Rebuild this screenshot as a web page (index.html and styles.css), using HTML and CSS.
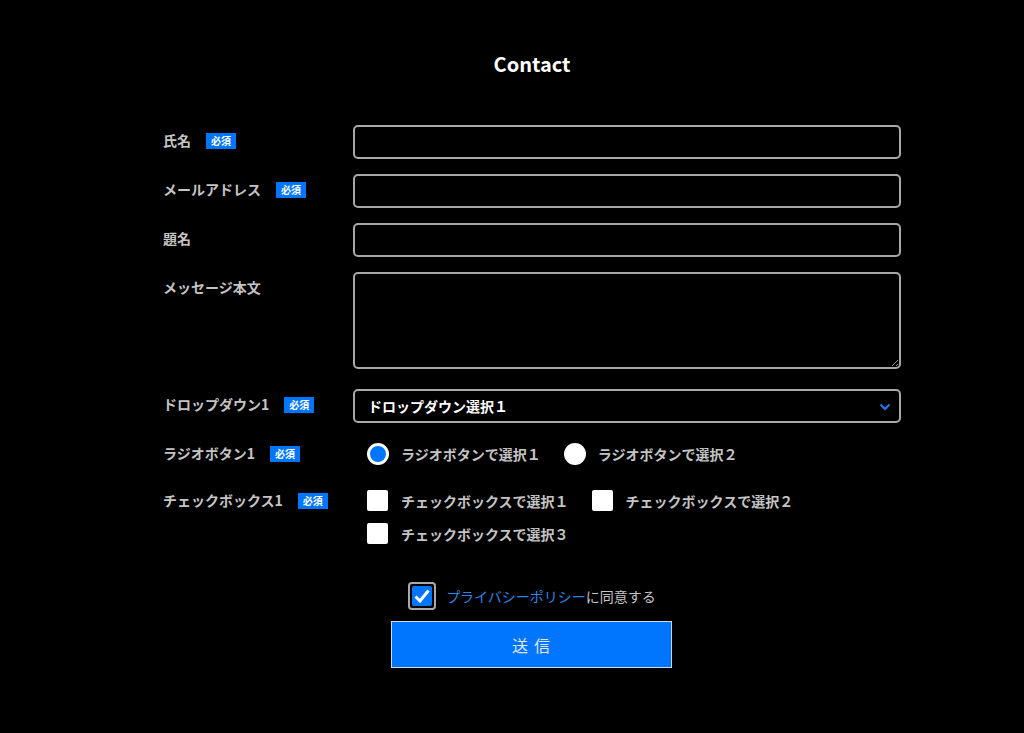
FILE: index.html
```html
<!DOCTYPE html>
<html lang="ja">
<head>
    <meta charset="UTF-8">
    <meta name="viewport" content="width=device-width, initial-scale=1.0">
    <title>Contact</title>
    <link rel="stylesheet" href="styles.css">
</head>
<body>
    <div class="container">
        <h1 class="title">Contact</h1>

        <form class="contact-form">
            <div class="form-row">
                <label class="form-label">氏名<span class="required">必須</span></label>
                <div class="form-field"><input type="text" class="text-input"></div>
            </div>
            <div class="form-row">
                <label class="form-label">メールアドレス<span class="required">必須</span></label>
                <div class="form-field"><input type="email" class="text-input"></div>
            </div>
            <div class="form-row">
                <label class="form-label">題名</label>
                <div class="form-field"><input type="text" class="text-input"></div>
            </div>
            <div class="form-row">
                <label class="form-label">メッセージ本文</label>
                <div class="form-field"><textarea class="text-input textarea"></textarea></div>
            </div>
            <div class="form-row row-select">
                <label class="form-label">ドロップダウン1<span class="required">必須</span></label>
                <div class="form-field">
                    <div class="select-box">
                        <span>ドロップダウン選択１</span>
                        <svg class="chevron" width="12" height="8" viewBox="0 0 12 8"><path d="M1.5 1.5 L6 6 L10.5 1.5" fill="none" stroke="#1a7cf5" stroke-width="2"/></svg>
                    </div>
                </div>
            </div>
            <div class="form-row row-radio">
                <label class="form-label">ラジオボタン1<span class="required">必須</span></label>
                <div class="form-field choices">
                    <label class="choice"><span class="radio checked"></span>ラジオボタンで選択１</label>
                    <label class="choice"><span class="radio"></span>ラジオボタンで選択２</label>
                </div>
            </div>
            <div class="form-row row-check">
                <label class="form-label">チェックボックス1<span class="required">必須</span></label>
                <div class="form-field choices">
                    <label class="choice"><span class="checkbox"></span>チェックボックスで選択１</label>
                    <label class="choice"><span class="checkbox"></span>チェックボックスで選択２</label>
                    <label class="choice"><span class="checkbox"></span>チェックボックスで選択３</label>
                </div>
            </div>

            <div class="agree">
                <span class="agree-box">
                    <svg width="18" height="16" viewBox="0 0 18 16"><path d="M2.5 8.5 L7 13 L15.5 2.5" fill="none" stroke="#fff" stroke-width="3"/></svg>
                </span>
                <span class="agree-text"><span class="link">プライバシーポリシー</span>に同意する</span>
            </div>

            <button type="button" class="submit">送信</button>
        </form>
    </div>
</body>
</html>
```

FILE: styles.css
```css
:root {
    --blue: #0076ff;
    --label-color: #c4c4c4;
    --border-color: #a8a8a8;
}

* {
    margin: 0;
    padding: 0;
    box-sizing: border-box;
}

body {
    background-color: #000;
    color: var(--label-color);
    font-family: "Noto Sans CJK JP", "Noto Sans", sans-serif;
}

.container {
    width: 738px;
    margin-left: 163px;
    padding-top: 50px;
}

.title {
    text-align: center;
    color: #fff;
    font-size: 20px;
    font-weight: 700;
    line-height: 28px;
    margin-bottom: 47px;
}

.form-row {
    display: flex;
    margin-bottom: 15px;
}

.form-label {
    width: 190px;
    flex-shrink: 0;
    font-size: 14px;
    font-weight: 700;
    line-height: 20px;
    padding-top: 5px;
    display: flex;
    align-items: flex-start;
}

.required {
    display: inline-block;
    background-color: var(--blue);
    color: #fff;
    font-size: 10px;
    font-weight: 700;
    line-height: 16px;
    padding: 0 5px;
    margin-left: 15px;
    margin-top: 3px;
}

.form-field {
    flex: 1;
}

.text-input {
    display: block;
    width: 100%;
    height: 34px;
    background-color: #000;
    border: 2px solid var(--border-color);
    border-radius: 5px;
    color: #fff;
}

.textarea {
    height: 97px;
    resize: vertical;
}

.row-select {
    margin-top: 20px;
    margin-bottom: 20px;
}

.select-box {
    height: 34px;
    border: 2px solid var(--border-color);
    border-radius: 5px;
    display: flex;
    align-items: center;
    justify-content: space-between;
    padding: 0 8px 0 13px;
    color: #fff;
    font-size: 14px;
    font-weight: 700;
}

.chevron {
    margin-top: 2px;
}

.choices {
    display: flex;
    flex-wrap: wrap;
    column-gap: 23px;
    row-gap: 12px;
    padding-left: 14px;
}

.row-radio {
    margin-bottom: 25px;
}

.row-radio .form-label,
.row-check .form-label {
    padding-top: 0;
}

.choice {
    display: flex;
    align-items: center;
    font-size: 14px;
    font-weight: 700;
    line-height: 20px;
}

.radio {
    width: 22px;
    height: 22px;
    border-radius: 50%;
    background-color: #fff;
    margin-right: 12px;
}

.radio.checked {
    background-color: var(--blue);
    border: 3px solid #fff;
}

.checkbox {
    width: 21px;
    height: 21px;
    background-color: #fff;
    border-radius: 2px;
    margin-right: 13px;
}

.agree {
    display: flex;
    align-items: center;
    justify-content: center;
    margin-top: 38px;
    font-size: 14px;
    line-height: 20px;
}

.agree-box {
    width: 28px;
    height: 28px;
    border: 2px solid #aaa;
    border-radius: 4px;
    padding: 2px;
    margin-right: 10px;
}

.agree-box svg {
    display: block;
    width: 20px;
    height: 20px;
    background-color: var(--blue);
    border-radius: 2px;
    padding: 2px 1px;
}

.link {
    color: #2a86e6;
}

.submit {
    display: block;
    width: 281px;
    height: 47px;
    margin: 11px auto 0;
    position: relative;
    left: -1px;
    background-color: var(--blue);
    border: 1px solid #cfd8e4;
    color: #e4e4e4;
    font-family: "Noto Sans CJK JP", "Noto Sans", sans-serif;
    font-size: 16px;
    letter-spacing: 6px;
    text-indent: 6px;
}
```
